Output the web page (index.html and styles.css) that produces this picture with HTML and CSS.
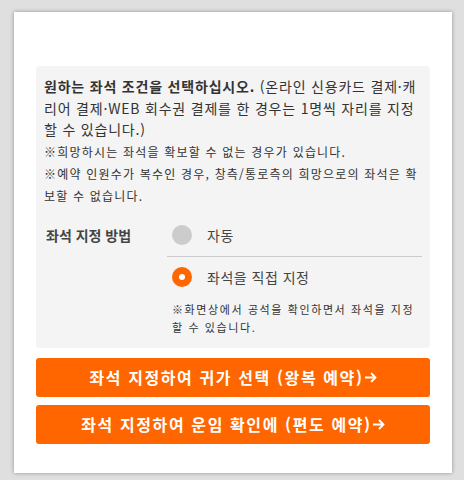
FILE: index.html
```html
<!DOCTYPE html>
<html lang="ko">
<head>
<meta charset="utf-8">
<link rel="stylesheet" href="styles.css">
</head>
<body>
<div class="card">
  <div class="panel">
    <p class="lead"><strong>원하는 좌석 조건을 선택하십시오.</strong> (온라인 신용카드 결제·캐리어 결제·WEB 회수권 결제를 한 경우는 1명씩 자리를 지정할 수 있습니다.)</p>
    <p class="note">※희망하시는 좌석을 확보할 수 없는 경우가 있습니다.</p>
    <p class="note">※예약 인원수가 복수인 경우, 창측/통로측의 희망으로의 좌석은 확보할 수 없습니다.</p>
    <div class="method">
      <div class="label">좌석 지정 방법</div>
      <div class="options">
        <div class="option">
          <span class="radio"></span><span class="opt-text">자동</span>
        </div>
        <div class="option option-checked">
          <span class="radio radio-on"></span><span class="opt-text">좌석을 직접 지정</span>
        </div>
        <p class="opt-note">※화면상에서 공석을 확인하면서 좌석을 지정할 수 있습니다.</p>
      </div>
    </div>
  </div>
  <button class="btn">좌석 지정하여 귀가 선택 (왕복 예약)<svg class="arrow" width="13" height="13" viewBox="0 0 13 13"><path d="M1 6.5H11.5M7 2L11.5 6.5L7 11" fill="none" stroke="#fff" stroke-width="1.8"/></svg></button>
  <button class="btn">좌석 지정하여 운임 확인에 (편도 예약)<svg class="arrow" width="13" height="13" viewBox="0 0 13 13"><path d="M1 6.5H11.5M7 2L11.5 6.5L7 11" fill="none" stroke="#fff" stroke-width="1.8"/></svg></button>
</div>
</body>
</html>
```
FILE: styles.css
```css
html, body {
  margin: 0;
  padding: 0;
  background: #dfdfdf;
}
body {
  font-family: "Noto Sans CJK KR", "Noto Sans", sans-serif;
  color: #333;
  padding: 12px 12px 7px 14px;
}
.card {
  width: 438px;
  height: 461px;
  box-sizing: border-box;
  background: #fff;
  box-shadow: 0 0 4px rgba(0,0,0,0.35);
  padding: 54px 22px 0 22px;
}
.panel {
  background: #f4f4f4;
  border-radius: 4px;
  padding: 10px 8px 12px 8px;
}
.panel p {
  margin: 0;
  word-break: break-all;
}
.lead {
  font-size: 14px;
  line-height: 21.5px;
  letter-spacing: 0.8px;
  color: #333;
}
.lead strong { font-weight: 700; }
.note {
  font-size: 12px;
  line-height: 22px;
  letter-spacing: 1.2px;
  color: #333;
}
.method {
  display: flex;
  margin-top: 8px;
}
.label {
  width: 123px;
  padding-left: 2px;
  box-sizing: border-box;
  font-size: 14px;
  font-weight: 700;
  color: #444;
  line-height: 40px;
}
.options {
  flex: 1;
}
.option {
  display: flex;
  align-items: center;
  height: 41px;
  padding-left: 5px;
}
.option-checked {
  border-top: 1px solid #ccc;
}
.radio {
  width: 20px;
  height: 20px;
  border-radius: 50%;
  background: #cccccc;
  box-sizing: border-box;
  flex: none;
}
.radio-on {
  background: #fff;
  border: 7px solid #ff6600;
}
.opt-text {
  margin-left: 15px;
  font-size: 14px;
  letter-spacing: 0.5px;
  color: #444;
}
.panel .opt-note {
  margin: 2px 0 0 0;
  padding-left: 5px;
  font-size: 11px;
  line-height: 18px;
  letter-spacing: 1.6px;
  color: #333;
}
.btn {
  display: flex;
  align-items: center;
  justify-content: center;
  width: 100%;
  height: 39px;
  margin-top: 10px;
  border: none;
  border-radius: 3px;
  background: #ff6600;
  color: #fff;
  font-family: "Noto Sans CJK KR", "Noto Sans", sans-serif;
  font-size: 16px;
  font-weight: 700;
  letter-spacing: 1.6px;
  padding: 0;
}
.btn + .btn { margin-top: 8px; }
.arrow { margin-left: 0; }
```
